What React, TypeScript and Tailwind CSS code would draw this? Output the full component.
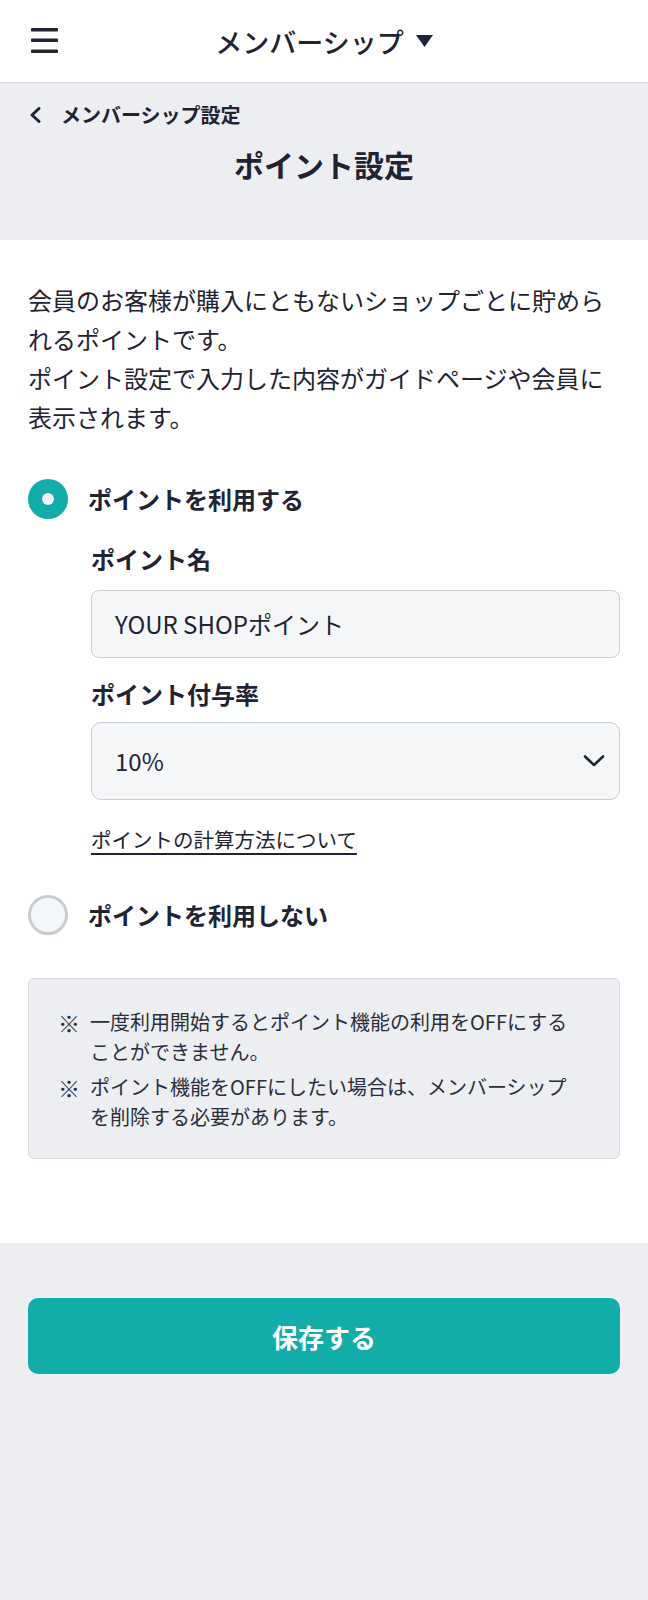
import { useState } from "react";

const font = { fontFamily: '"Noto Sans CJK JP", "Noto Sans", sans-serif' };

function Radio({ checked }: { checked: boolean }) {
  if (checked) {
    return (
      <span className="w-10 h-10 rounded-full bg-[#12ada9] flex items-center justify-center flex-shrink-0">
        <span className="w-3 h-3 rounded-full bg-[#f5f6f8]" />
      </span>
    );
  }
  return <span className="w-10 h-10 rounded-full border-[3px] border-[#c8ccd4] bg-[#f5f6f8] flex-shrink-0" />;
}

export default function App() {
  const [usePoint, setUsePoint] = useState(true);

  return (
    <div className="min-h-screen bg-[#eceef2] text-[#1f2333]" style={font}>
      {/* Top bar */}
      <div className="h-[83px] bg-white border-b border-[#d9dce3] relative flex items-center justify-center">
        <svg className="absolute left-[31px] top-[28px]" width="27" height="25" viewBox="0 0 27 25">
          <rect x="0" y="0" width="27" height="3.5" rx="1" fill="#1f2333" />
          <rect x="0" y="10.5" width="27" height="3.5" rx="1" fill="#1f2333" />
          <rect x="0" y="21.5" width="27" height="3.5" rx="1" fill="#1f2333" />
        </svg>
        <div className="flex items-center gap-3">
          <span className="text-[27px] font-medium leading-none">メンバーシップ</span>
          <svg width="17" height="12" viewBox="0 0 17 12">
            <path d="M0 0 H17 L8.5 12 Z" fill="#1f2333" />
          </svg>
        </div>
      </div>

      {/* Sub header */}
      <div className="h-[157px] pt-[17px] px-7">
        <div className="h-[30px] flex items-center gap-[19px]">
          <svg width="13" height="16" viewBox="0 0 13 16" className="ml-[1px]">
            <path d="M10 1.5 L3 8 L10 14.5" fill="none" stroke="#1f2333" strokeWidth="3" strokeLinecap="round" strokeLinejoin="round" />
          </svg>
          <span className="text-[20px] font-bold">メンバーシップ設定</span>
        </div>
        <h1 className="mt-[14px] text-[30px] leading-[40px] font-bold text-center">ポイント設定</h1>
      </div>

      {/* Content */}
      <div className="bg-white px-7 pt-10 pb-[84px]">
        <p className="text-[24px] leading-[39px]">
          会員のお客様が購入にともないショップごとに貯められるポイントです。
          <br />
          ポイント設定で入力した内容がガイドページや会員に表示されます。
        </p>

        <button className="mt-[43px] flex items-center gap-5 h-10" onClick={() => setUsePoint(true)}>
          <Radio checked={usePoint} />
          <span className="text-[24px] font-bold">ポイントを利用する</span>
        </button>

        <div className="ml-[63px]">
          <p className="mt-[22px] text-[24px] leading-[36px] font-bold">ポイント名</p>
          <div className="mt-[13px] h-[68px] rounded-lg border border-[#c8ccd4] bg-[#f5f6f8] px-[23px] flex items-center text-[24px]">
            YOUR SHOPポイント
          </div>
          <p className="mt-[18px] text-[24px] leading-[36px] font-bold">ポイント付与率</p>
          <div className="mt-[10px] h-[78px] rounded-[10px] border border-[#c8ccd4] bg-[#f5f6f8] pl-[23px] pr-[14px] flex items-center justify-between text-[24px]">
            <span>10%</span>
            <svg width="22" height="14" viewBox="0 0 22 14">
              <path d="M2 2.5 L11 11 L20 2.5" fill="none" stroke="#1f2333" strokeWidth="2.6" strokeLinecap="round" strokeLinejoin="round" />
            </svg>
          </div>
          <a className="mt-6 inline-block text-[20.5px] leading-[30px] underline underline-offset-[5px] decoration-[1.5px]">
            ポイントの計算方法について
          </a>
        </div>

        <button className="mt-[41px] flex items-center gap-5 h-10" onClick={() => setUsePoint(false)}>
          <Radio checked={!usePoint} />
          <span className="text-[24px] font-bold">ポイントを利用しない</span>
        </button>

        <div className="mt-[43px] rounded-md border border-[#d5d8de] bg-[#eceef2] pt-[28px] pb-[26px] pl-[29px] pr-[44px] text-[20px] leading-[30px] text-[#2a2e3a] flex flex-col gap-[5px]">
          <div className="flex gap-[10px]">
            <span className="text-[22px]">※</span>
            <span>一度利用開始するとポイント機能の利用をOFFにすることができません。</span>
          </div>
          <div className="flex gap-[10px]">
            <span className="text-[22px]">※</span>
            <span>ポイント機能をOFFにしたい場合は、メンバーシップを削除する必要があります。</span>
          </div>
        </div>
      </div>

      {/* Footer */}
      <div className="px-7 pt-[55px] pb-[226px]">
        <button className="w-full h-[76px] rounded-[10px] bg-[#12ada9] text-white text-[26px] font-bold">
          保存する
        </button>
      </div>
    </div>
  );
}
